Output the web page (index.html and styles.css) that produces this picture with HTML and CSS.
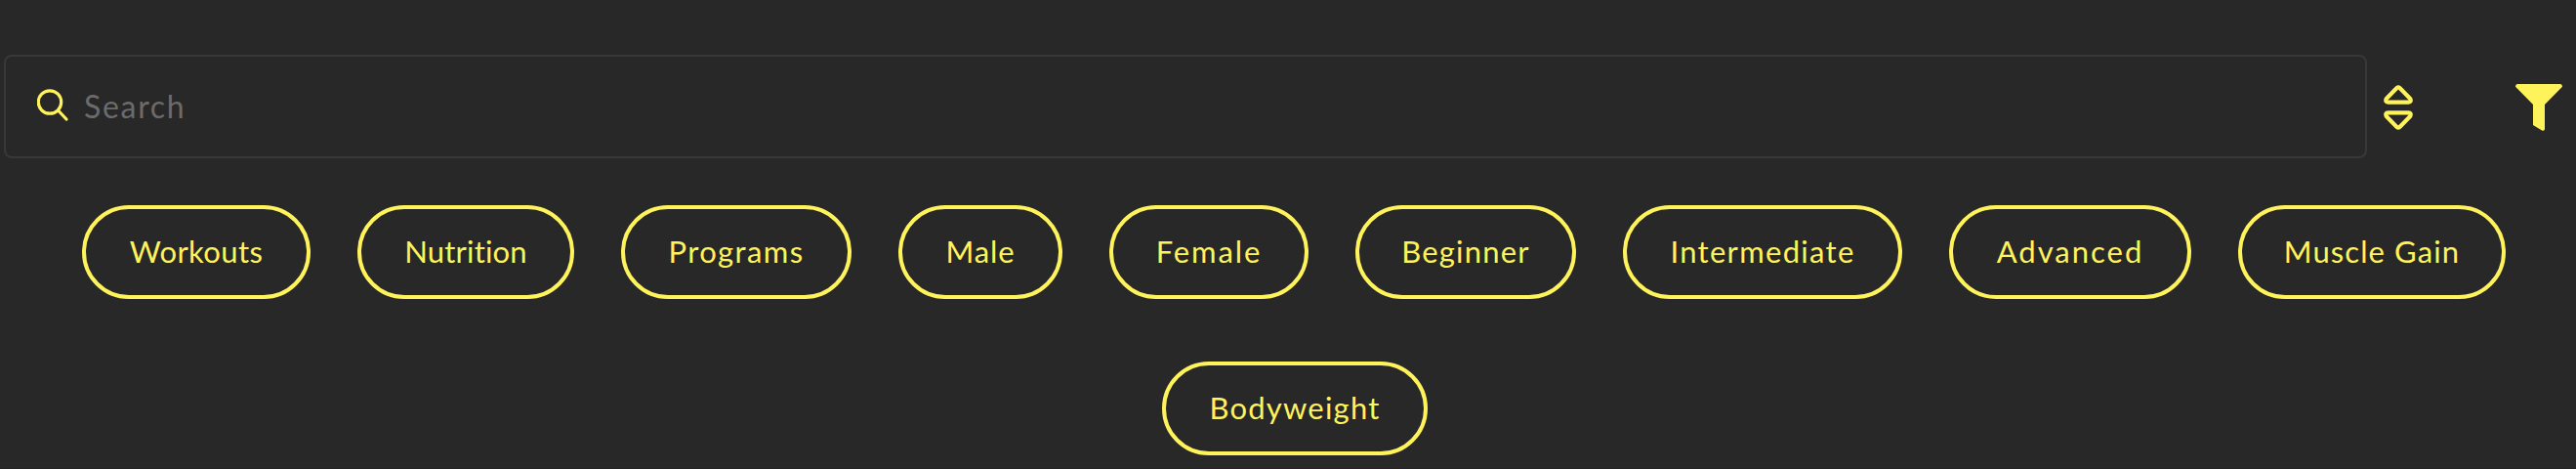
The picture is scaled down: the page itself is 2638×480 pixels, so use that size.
FILE: index.html
```html
<!DOCTYPE html>
<html lang="en">
<head>
<meta charset="utf-8">
<title>Search</title>
<link rel="stylesheet" href="styles.css">
</head>
<body>
<main class="page">
  <div class="toolbar">
    <label class="search">
      <svg class="search-icon" width="34" height="34" viewBox="0 0 34 34"><circle cx="13" cy="13.5" r="11.7"/><path d="M21.5 22L30 31"/></svg>
      <input class="search-input" type="text" placeholder="Search">
    </label>
    <svg class="sort-icon" width="32" height="48" viewBox="0 0 32 48"><path d="M14.5 4.1Q16 2.7 17.5 4.1L28.2 14.9Q29.8 18.6 26.5 18.6H5.5Q2.2 18.6 3.8 14.9Z"/><path d="M14.5 43.9Q16 45.3 17.5 43.9L28.2 33.1Q29.8 29.4 26.5 29.4H5.5Q2.2 29.4 3.8 33.1Z"/></svg>
    <svg class="filter-icon" width="48" height="48" viewBox="0 0 48 48"><path d="M2 0H46Q48 .2 48 2.8L30 21V46.3Q29.6 48 27.5 47.8L18 42V21L0 2.8Q0 .2 2 0Z"/></svg>
  </div>
  <div class="chips">
    <button class="chip workouts">Workouts</button>
    <button class="chip nutrition">Nutrition</button>
    <button class="chip programs">Programs</button>
    <button class="chip male">Male</button>
    <button class="chip female">Female</button>
    <button class="chip beginner">Beginner</button>
    <button class="chip intermediate">Intermediate</button>
    <button class="chip advanced">Advanced</button>
    <button class="chip muscle">Muscle Gain</button>
    <button class="chip bodyweight">Bodyweight</button>
  </div>
</main>
</body>
</html>
```
FILE: styles.css
```css
* { box-sizing: border-box; }
body { margin: 0; background: #282828; font-family: Lato, "Open Sans", sans-serif; font-variant-ligatures: none; }
.page { height: 480px; padding-top: 56px; overflow: hidden; border-bottom: 1px solid #282326; }
.toolbar { display: flex; align-items: center; height: 106px; padding-left: 4px; }
.search { display: flex; align-items: center; width: 2420px; height: 106px; padding-left: 32px; border: 2px solid #383838; border-radius: 8px; }
.search-icon { flex: none; margin-top: -2px; fill: none; stroke: #fff35c; stroke-width: 3.2; stroke-linecap: round; }
.search-input { flex: 1; margin-left: 14px; padding: 0 0 2px; border: 0; outline: 0; background: none; color: #fff35c; font: 32px Lato, sans-serif; letter-spacing: 1.7px; }
.search-input::placeholder { color: #6b6b6b; opacity: 1; }
.sort-icon { margin-left: 16px; margin-top: 2px; fill: none; stroke: #fff35c; stroke-width: 4.2; stroke-linejoin: round; }
.filter-icon { margin-left: 104px; margin-top: 2px; fill: #fff35c; }
.chips { display: flex; flex-wrap: wrap; justify-content: center; gap: 64px 48px; padding: 48px 0 0 12px; }
.chip { height: 96px; padding: 0 0 3px; border: 4px solid #fff35c; border-radius: 48px; background: none; color: #fff35c; font: 31px Lato, sans-serif; font-variant-ligatures: none; white-space: nowrap; }
.workouts { width: 234px; letter-spacing: 0.4px; }
.nutrition { width: 222px; letter-spacing: 0.2px; }
.programs { width: 236px; letter-spacing: 1.4px; }
.male { width: 168px; letter-spacing: 0.9px; }
.female { width: 204px; letter-spacing: 1.9px; }
.beginner { width: 226px; letter-spacing: 1.2px; }
.intermediate { width: 286px; letter-spacing: 1.3px; }
.advanced { width: 248px; letter-spacing: 2px; }
.muscle { width: 274px; letter-spacing: 1.1px; }
.bodyweight { width: 272px; margin-left: 2px; letter-spacing: 1.2px; }
```
